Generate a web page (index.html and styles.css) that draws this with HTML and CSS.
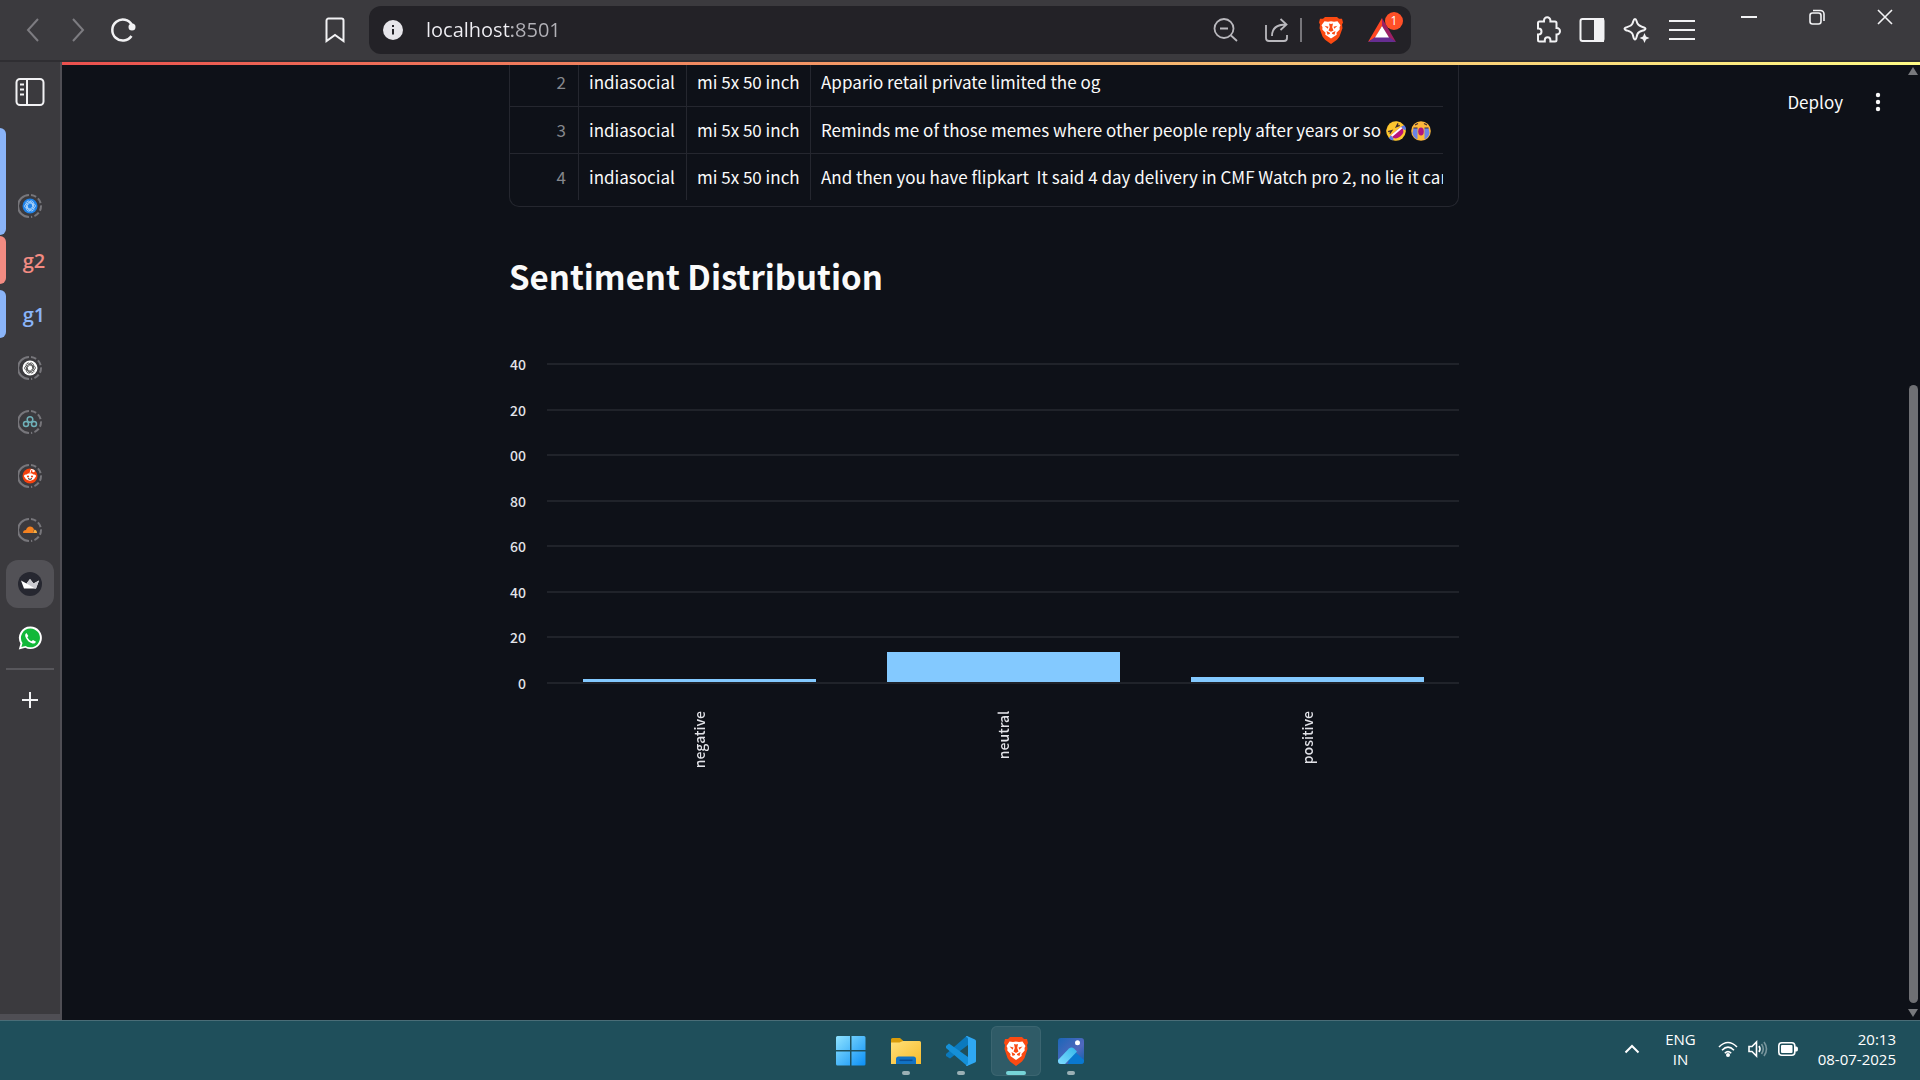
FILE: index.html
```html
<!DOCTYPE html>
<html lang="en">
<head>
<meta charset="utf-8">
<title>Sentiment Distribution</title>
<link rel="stylesheet" href="styles.css">
</head>
<body>
<svg class="defs" aria-hidden="true">
  <defs>
    <symbol id="ring" viewBox="0 0 24 24"><g fill="none" stroke="#77767b" stroke-width="2"><path d="M11 1A11 11 0 0 0 11 23"/><path d="M13 1A11 11 0 0 1 23 12A11 11 0 0 1 13 23" stroke-dasharray="5.500 2.300"/></g></symbol>
    <symbol id="knot" viewBox="0 0 14 14"><g fill="none" stroke="currentColor" stroke-width=".9"><path d="M7 1.500a2.600 2.600 0 0 1 4 2.500v4L7.500 10M11.800 4.500a2.600 2.600 0 0 1-.2 4.700L8 11.300 4.500 9.200M11.500 9.500a2.600 2.600 0 0 1-4 2.800L4 10.200V6.200M7 12.500a2.600 2.600 0 0 1-4-2.500V6l3.500-2M2.200 9.500a2.600 2.600 0 0 1 .2-4.700L6 2.700l3.500 2.100M2.500 4.500a2.600 2.600 0 0 1 4-2.800L10 3.800v4"/></g></symbol>
    <symbol id="brave" viewBox="0 0 26 30"><path d="M7 1h12l2 2 3 0 1 4-1 2 .5 4-3 9-2.500 3.500L13 30l-6-4.500L4.500 22l-3-9L2 9 1 7l1-4h3z" fill="#fb4a12"/><path d="M13 5.500l3 .6 3.500-.6 3 4.500-1 2 .2 2.500-3.200 3.500.2 2L13 24l-5.700-4 .2-2-3.200-3.500.2-2.500-1-2 3-4.500 3.500.6z" fill="#fff"/><path d="M6.500 10.500l4 1-.8 2.200zM19.500 10.500l-4 1 .8 2.200zM11 8l2 .6L15 8l-.8 4 1.300 3.500L13 17l-2.500-1.500L11.800 12zM8.500 16l3.500 2v1l-2.500 1zM17.500 16L14 18v1l2.500 1z" fill="#fb4a12"/></symbol>
  </defs>
</svg>

<header class="toolbar">
  <nav class="history">
    <button class="icon-btn dim" aria-label="Back"><svg width="14" height="24" viewBox="0 0 14 24"><path d="M12 1L2 12l10 11"/></svg></button>
    <button class="icon-btn dim" aria-label="Forward"><svg width="14" height="24" viewBox="0 0 14 24"><path d="M2 1l10 11L2 23"/></svg></button>
    <button class="icon-btn" aria-label="Reload"><svg width="26" height="26" viewBox="0 0 26 26"><path d="M21.500 19A10.500 10.500 0 1 1 22 8" stroke-width="2.500"/><circle cx="22" cy="10" r="3.500" fill="currentColor" stroke="none"/></svg></button>
  </nav>
  <button class="icon-btn bookmark" aria-label="Bookmark"><svg width="20" height="26" viewBox="0 0 20 26"><path d="M3.500 1.500h13a2 2 0 0 1 2 2v20.500L10 18l-8.500 6V3.500a2 2 0 0 1 2-2z"/></svg></button>
  <div class="address">
    <svg class="info" width="20" height="20" viewBox="0 0 20 20" aria-hidden="true"><circle cx="10" cy="10" r="10" fill="#e6e5ea"/><path d="M10 9v5.500M10 5v2" stroke="#232227" stroke-width="2"/></svg>
    <input class="url" type="text" aria-label="Address" value="localhost:8501">
    <button class="icon-btn soft" aria-label="Zoom out"><svg width="26" height="24" viewBox="0 0 26 24"><circle cx="11" cy="10.500" r="9.500" stroke-width="1.800"/><path d="M18 17.500l6 5.500M7 10.500h8" stroke-width="1.800"/></svg></button>
    <button class="icon-btn soft share" aria-label="Share"><svg width="26" height="26" viewBox="0 0 26 26"><path d="M2 8v13a3 3 0 0 0 3 3h15a3 3 0 0 0 3-3v-3" stroke-width="1.800"/><path d="M8 19C8 12 12 7.500 22 7.500M16.500 2L22.500 7.500l-6 5.500" stroke-width="1.800"/></svg></button>
    <span class="divider"></span>
    <button class="icon-btn" aria-label="Brave Shields"><svg width="26" height="28" viewBox="0 0 26 30" stroke="none" preserveAspectRatio="none"><use href="#brave"/></svg></button>
    <button class="icon-btn rewards" aria-label="Rewards"><svg width="28" height="26" viewBox="0 0 28 26" stroke="none"><path d="M14 1L0 25l7-4 7-12z" fill="#ff4724"/><path d="M14 1l14 24-7-4-7-12z" fill="#9e1f63"/><path d="M0 25h28l-7-5H7z" fill="#662d91"/><path d="M14 9l7 11.500H7z" fill="#fff"/></svg><span class="badge">1</span></button>
  </div>
  <div class="tools">
    <button class="icon-btn" aria-label="Extensions"><svg width="26" height="28" viewBox="0 0 26 28"><path d="M4.500 5.500H9V4.500a3.200 3.200 0 0 1 6.400 0v1h4.600a1.500 1.500 0 0 1 1.500 1.500v5h.3a3.200 3.200 0 0 1 0 6.400h-.3v5.600a1.500 1.500 0 0 1-1.500 1.500h-4.600V24a2.800 2.800 0 0 0-5.600 0v1.500H4.500A1.500 1.500 0 0 1 3 24v-5.400h.5a3 3 0 0 0 0-6H3V7a1.500 1.500 0 0 1 1.500-1.500z"/></svg></button>
    <button class="icon-btn" aria-label="Sidebar"><svg width="26" height="26" viewBox="0 0 26 26"><rect x="1.500" y="2" width="23" height="22" rx="2"/><path d="M16 2h8v22h-8z" fill="currentColor"/></svg></button>
    <button class="icon-btn" aria-label="Leo AI"><svg width="28" height="28" viewBox="0 0 28 28"><path d="M12 3c1.500 0 1.500 2.500 2.500 4.500S18 10.500 21 11.500c2 .7 2 2 0 2.700-3 1-5.500 1.500-6.500 3.800S13.500 23.500 12 23.500s-1.500-3-2.500-5.500-3.500-2.800-6.500-3.800c-2-.7-2-2 0-2.700 3-1 5.500-1.500 6.500-4S10.500 3 12 3z"/><path d="M21.500 17l1.500 3.500 3.500 1.500-3.500 1.500-1.500 3.500-1.500-3.500-3.500-1.500 3.500-1.500z" fill="currentColor" stroke="none"/></svg></button>
    <button class="icon-btn" aria-label="Menu"><svg width="26" height="22" viewBox="0 0 26 22"><path d="M0 2h26M0 11h26M0 20h26"/></svg></button>
  </div>
  <div class="window-controls">
    <button class="icon-btn" aria-label="Minimise"><svg width="16" height="16" viewBox="0 0 16 16"><path d="M0 8h16"/></svg></button>
    <button class="icon-btn" aria-label="Restore"><svg width="16" height="16" viewBox="0 0 16 16"><rect x="1" y="4" width="11" height="11" rx="2.500" stroke-width="1.600"/><path d="M4 1.500h7.500a3.500 3.500 0 0 1 3.500 3.500v7" stroke-width="1.600"/></svg></button>
    <button class="icon-btn" aria-label="Close"><svg width="16" height="16" viewBox="0 0 16 16"><path d="M1 1l14 14M15 1L1 15" stroke-width="1.600"/></svg></button>
  </div>
</header>

<div class="workspace">
  <nav class="tabs" aria-label="Tabs">
    <button class="tabs-toggle" aria-label="Toggle tabs"><svg width="30" height="30" viewBox="0 0 30 30" fill="none" stroke="#f2f2f4" stroke-width="2"><rect x="1.500" y="2" width="27" height="26" rx="3.500"/><path d="M12 2v26"/><path d="M5 7.500h4M5 12.500h4M5 17.500h4"/></svg></button>
    <button class="tab tall strip blue" aria-label="ChatGPT"><svg width="24" height="24" viewBox="0 0 24 24"><use href="#ring"/><circle cx="12" cy="12" r="7.500" fill="#1e83ea"/><svg x="6" y="6" width="12" height="12" color="#d5ecff"><use href="#knot"/></svg></svg></button>
    <button class="tab strip red">g2</button>
    <button class="tab strip blue">g1</button>
    <button class="tab" aria-label="ChatGPT"><svg width="24" height="24" viewBox="0 0 24 24"><use href="#ring"/><circle cx="12" cy="12" r="7.500" fill="#fff"/><svg x="6" y="6" width="12" height="12" color="#222"><use href="#knot"/></svg></svg></button>
    <button class="tab" aria-label="Linked app"><svg width="24" height="24" viewBox="0 0 24 24"><use href="#ring"/><g fill="none" stroke="#6fb0b8" stroke-width="1.500"><circle cx="12" cy="9.500" r="2.800"/><circle cx="8" cy="14" r="2.500"/><circle cx="16" cy="14" r="2.500"/></g></svg></button>
    <button class="tab" aria-label="Reddit"><svg width="24" height="24" viewBox="0 0 24 24"><use href="#ring"/><circle cx="12" cy="12" r="7.500" fill="#f5410e"/><path d="M12 9l1-3.500 2.500.5" fill="none" stroke="#fff"/><circle cx="15.500" cy="7" r="1.300" fill="#fff"/><circle cx="7.500" cy="12" r="1.500" fill="#fff"/><circle cx="16.500" cy="12" r="1.500" fill="#fff"/><ellipse cx="12" cy="13" rx="5" ry="3.700" fill="#fff"/><circle cx="10" cy="12.500" r="1.100" fill="#f5410e"/><circle cx="14" cy="12.500" r="1.100" fill="#f5410e"/><path d="M10 14.600q2 1.500 4 0" stroke="#222" fill="none"/></svg></button>
    <button class="tab" aria-label="Cloudflare"><svg width="24" height="24" viewBox="0 0 24 24"><use href="#ring"/><path d="M5 15q0-3 3-3 1-3.500 4-3.500 3 0 4 3l-1 3.500z" fill="#f48120"/><path d="M15 15l1.500-3.500q2.500.5 2.500 3.500z" fill="#faad3f"/></svg></button>
    <button class="tab active" aria-label="Streamlit"><svg width="24" height="24" viewBox="0 0 24 24"><circle cx="12" cy="12" r="12" fill="#262730"/><path d="M3 8.500l5.500 3L12 7l3.500 4.500 5.500-3L18 16.500H6z" fill="#fff"/><path d="M12 7l-3.500 4.500L17 16.500h1l3-8-5.500 3z" fill="#c9c9cf"/></svg></button>
    <button class="tab" aria-label="WhatsApp"><svg width="24" height="24" viewBox="0 0 24 24"><path d="M12.300.5a11.300 11.300 0 1 1-5 21.300L.8 23.500l1.700-6A11.300 11.300 0 0 1 12.300.5z" fill="#fff"/><path d="M12.300 2.500a9.400 9.400 0 1 1-4.700 17.400L3.400 21l1.100-4a9.400 9.400 0 0 1 7.800-14.500z" fill="#12b839"/><path d="M8.500 7q-2 1-1 4 2 5 7 6.500 2.500.5 3.500-1.800l-3-1.700-1.500 1.300q-3-1.300-4.200-4L10.400 10z" fill="#fff"/></svg></button>
    <hr class="tabs-rule">
    <button class="tab" aria-label="New tab"><svg width="16" height="16" viewBox="0 0 16 16"><path d="M8 0v16M0 8h16" stroke="#f2f2f4" stroke-width="2"/></svg></button>
  </nav>

  <div class="page">
    <div class="loading"></div>
    <main class="content">
      <div class="frame">
        <table class="data">
          <colgroup><col class="c-index"><col class="c-sub"><col class="c-query"><col></colgroup>
          <tbody>
            <tr><th scope="row">2</th><td>indiasocial</td><td>mi 5x 50 inch</td><td>Appario retail private limited the og</td></tr>
            <tr><th scope="row">3</th><td>indiasocial</td><td>mi 5x 50 inch</td><td>Reminds me of those memes where other people reply after years or so
              <svg class="emoji" width="20" height="20" viewBox="0 0 20 20" role="img" aria-label="rolling on the floor laughing"><g transform="rotate(-40 10 10)"><circle cx="10" cy="10" r="9.800" fill="#fdc62f"/><path d="M3 10h14q0 7-7 7t-7-7z" fill="#b8127c"/><path d="M3.300 10h13.400v2H3.500z" fill="#fff"/><path d="M3.500 5.500L7 7 3.500 8M16.500 5.500L13 7l3.500 1" fill="none" stroke="#402a32" stroke-width="1.300"/><path d="M0 11l3-1q1 5-1 5T0 11zM20 11l-3-1q-1 5 1 5t2-4z" fill="#5b78e8"/></g></svg>
              <svg class="emoji" width="20" height="20" viewBox="0 0 20 20" role="img" aria-label="loudly crying"><circle cx="10" cy="10" r="9.800" fill="#fdb83b"/><path d="M2.500 7h4v11.500Q2 16 1.500 12zM17.500 7h-4v11.500q4.500-2.500 5-6.500z" fill="#6a83e6"/><ellipse cx="10" cy="10.500" rx="2.800" ry="4" fill="#b0127e"/><path d="M2.500 7h4M13.500 7h4M4 4l3-1.500M16 4l-3-1.500" stroke="#402a32" stroke-width="1.200"/></svg></td></tr>
            <tr><th scope="row">4</th><td>indiasocial</td><td>mi 5x 50 inch</td><td>And then you have flipkart&nbsp; It said 4 day delivery in CMF Watch pro 2, no lie it car</td></tr>
          </tbody>
        </table>
      </div>

      <h2 class="title">Sentiment Distribution</h2>

      <figure class="chart">
        <div class="plot">
          <div class="tick"><span>40</span></div>
          <div class="tick"><span>20</span></div>
          <div class="tick"><span>00</span></div>
          <div class="tick"><span>80</span></div>
          <div class="tick"><span>60</span></div>
          <div class="tick"><span>40</span></div>
          <div class="tick"><span>20</span></div>
          <div class="tick"><span>0</span></div>
          <div class="bars">
            <div class="slot"><div class="bar" style="height: 0.9%"></div></div>
            <div class="slot"><div class="bar" style="height: 9.4%"></div></div>
            <div class="slot"><div class="bar" style="height: 1.5%"></div></div>
          </div>
        </div>
        <div class="categories"><span>negative</span><span>neutral</span><span>positive</span></div>
      </figure>
    </main>

    <div class="scrollbar" aria-hidden="true">
      <svg width="10" height="8" viewBox="0 0 10 8"><path d="M5 0l5 8H0z"/></svg>
      <div class="track"><div class="thumb"></div></div>
      <svg width="10" height="8" viewBox="0 0 10 8"><path d="M5 8l5-8H0z"/></svg>
    </div>

    <div class="app-actions">
      <button class="deploy">Deploy</button>
      <button class="kebab" aria-label="More options"><svg width="6" height="20" viewBox="0 0 6 20" fill="#fafafa"><circle cx="3" cy="3" r="2.200"/><circle cx="3" cy="10" r="2.200"/><circle cx="3" cy="17" r="2.200"/></svg></button>
    </div>
  </div>
</div>

<footer class="taskbar">
  <div class="apps">
    <button class="app" aria-label="Start"><svg width="30" height="30" viewBox="0 0 30 30"><defs><linearGradient id="win" x1="0" y1="0" x2="1" y2="1"><stop offset="0" stop-color="#8fe3ff"/><stop offset="1" stop-color="#0b8ff5"/></linearGradient></defs><path d="M0 1.500A1.500 1.500 0 0 1 1.500 0H14v14H0zM15.500 0H28a1.500 1.500 0 0 1 1.500 1.500V14h-14zM0 15.500h14v14H1.500A1.500 1.500 0 0 1 0 28zM15.500 15.500h14V28a1.500 1.500 0 0 1-1.500 1.500H15.500z" fill="url(#win)"/></svg></button>
    <button class="app running" aria-label="File Explorer"><svg width="30" height="30" viewBox="0 0 30 30"><defs><linearGradient id="fold" x1="0" y1="0" x2="1" y2="1"><stop offset="0" stop-color="#ffe07a"/><stop offset="1" stop-color="#f8bc2c"/></linearGradient></defs><path d="M0 3.500A1.500 1.500 0 0 1 1.500 2H9l4 3.500V8H0z" fill="#d99c0a"/><path d="M0 6.500h8.500L12 5h16.500A1.500 1.500 0 0 1 30 6.500V28H0z" fill="url(#fold)"/><path d="M5 28v-5a2.500 2.500 0 0 1 2.500-2.500h15A2.500 2.500 0 0 1 25 23v5z" fill="#1273c4"/><path d="M8.500 24.300h13" stroke="#0a4d94" stroke-width="1.500"/></svg></button>
    <button class="app running" aria-label="Visual Studio Code"><svg width="30" height="30" viewBox="0 0 30 30"><path d="M22 0v9L4 22.500 0 20v-2L20 .5z" fill="#0a79bd"/><path d="M0 10l3-2.500L22 21v9l-2-1L0 12z" fill="#1590d8"/><path d="M21 0l8 3.500q1 .5 1 1.500v20q0 1-1 1.500L21 30q-1 0-1-1 2 0 2-2V3q0-2-2-2 0-1 1-1z" fill="#2fa8f3"/></svg></button>
    <button class="app running current" aria-label="Brave"><svg width="26" height="30" viewBox="0 0 26 30"><use href="#brave"/></svg></button>
    <button class="app running" aria-label="Photos"><svg width="26" height="26" viewBox="0 0 26 26"><defs><linearGradient id="ph" x1="0" y1="0" x2="1" y2="1"><stop offset="0" stop-color="#1b66b8"/><stop offset=".6" stop-color="#5168bd"/><stop offset="1" stop-color="#0e5fa8"/></linearGradient><linearGradient id="mt" x1="1" y1="0" x2="0" y2="1"><stop offset="0" stop-color="#33b7ea"/><stop offset="1" stop-color="#7fdcff"/></linearGradient></defs><rect width="26" height="26" rx="3" fill="url(#ph)"/><path d="M13 10l13 12v1a3 3 0 0 1-3 3H10z" fill="#0a78cf"/><path d="M0 22L11 10.500q2.500-2 5 0l3 3L7 26H3a3 3 0 0 1-3-3z" fill="url(#mt)"/><circle cx="19.500" cy="4.800" r="2.500" fill="#fff"/></svg></button>
  </div>
  <div class="tray">
    <button class="tray-btn chevron" aria-label="Show hidden icons"><svg width="16" height="10" viewBox="0 0 16 10"><path d="M1.500 8.500L8 2l6.500 6.500" fill="none" stroke="#fff" stroke-width="2"/></svg></button>
    <button class="tray-btn lang">ENG<br>IN</button>
    <button class="tray-btn status" aria-label="Network, sound and battery">
      <svg width="20" height="18" viewBox="0 0 20 18"><g fill="none" stroke="#fff" stroke-width="1.600"><path d="M1 7q9-9 18 0M4 10.200q6-6 12 0M6.800 13.200q3.200-3.200 6.400 0"/></g><circle cx="10" cy="15" r="2" fill="#fff"/></svg>
      <svg width="20" height="18" viewBox="0 0 20 18"><g fill="none" stroke="#fff" stroke-width="1.600"><path d="M1 6.500h3L8.500 2v14L4 11.500H1z"/><path d="M11 6q2 3 0 6"/><path d="M13.500 4q3.500 5 0 10M16 2q5 7 0 14" opacity=".4"/></g></svg>
      <svg width="20" height="14" viewBox="0 0 20 14"><rect x=".8" y=".8" width="16" height="12.400" rx="3" fill="none" stroke="#fff" stroke-width="1.600"/><rect x="3" y="3" width="11.500" height="8" rx="1" fill="#fff"/><path d="M17 4.500h1.500q1.500 0 1.500 2.500t-1.500 2.500H17z" fill="#fff"/></svg>
    </button>
    <button class="tray-btn clock"><time datetime="2025-07-08T20:13">20:13<br>08-07-2025</time></button>
  </div>
</footer>
</body>
</html>
```
FILE: styles.css
```css
:root {
  --chrome: #3b3a3e;
  --page: #0e1118;
  --line: #25272f;
  --task: #1f4f5b;
  --app-font: "Noto Sans CJK JP", "Noto Sans", sans-serif;
  --os-font: "Open Sans", "Noto Sans", sans-serif;
}

* { box-sizing: border-box; }

body {
  margin: 0;
  height: 100vh;
  display: flex;
  flex-direction: column;
  overflow: hidden;
  background: var(--page);
  font-family: var(--os-font);
}

button {
  margin: 0;
  padding: 0;
  border: 0;
  background: none;
  color: inherit;
  font: inherit;
}

svg { display: block; }
.defs { position: absolute; width: 0; height: 0; }

/* Browser toolbar */
.toolbar {
  flex: none;
  height: 62px;
  display: flex;
  align-items: center;
  background: var(--chrome);
  border-bottom: 2px solid #2f2e32;
  color: #f2f2f4;
}

.icon-btn {
  position: relative;
  display: flex;
  align-items: center;
  justify-content: center;
}
.icon-btn svg { fill: none; stroke: currentColor; stroke-width: 2; }
.icon-btn svg[stroke="none"] { stroke: none; }
.dim { color: #7d7c81; }
.soft { color: #b9b8bd; }

.history { display: flex; width: 320px; padding-left: 26px; }
.history .icon-btn { margin-right: 31px; }
.history .icon-btn + .icon-btn { margin-right: 25px; }
.bookmark { width: 30px; margin-right: 19px; }

.address {
  flex: 1;
  height: 48px;
  display: flex;
  align-items: center;
  padding: 0 15px 0 14px;
  border-radius: 12px;
  background: #232227;
}
.url {
  flex: 1;
  min-width: 0;
  margin-left: 23px;
  padding: 0;
  border: 0;
  outline: 0;
  font-family: var(--os-font);
  font-size: 20px;
  line-height: 28px;
  color: transparent;
  background: linear-gradient(90deg, #f0eff4 86px, #b3b2b8 86px);
  -webkit-background-clip: text;
  background-clip: text;
}
.share { margin-left: 25px; }
.divider { width: 2px; height: 24px; margin: 0 16px 0 10px; background: #77767b; }
.rewards { margin-left: 24px; }
.badge {
  position: absolute;
  top: -5px;
  right: -7px;
  width: 18px;
  height: 18px;
  border-radius: 9px;
  background: #ff5028;
  color: #fff;
  font-size: 12px;
  line-height: 18px;
  text-align: center;
}

.tools { display: flex; align-items: center; gap: 18px; margin-left: 124px; }
.window-controls { display: flex; gap: 52px; margin: 0 27px 26px 46px; }

/* Vertical tab strip */
.workspace { flex: 1; min-height: 0; display: flex; }

.tabs {
  flex: none;
  width: 62px;
  padding: 6px 6px 0 0;
  border-right: 2px solid #4f4e54;
  border-bottom: 6px solid #4f4e54;
  background: var(--chrome);
  display: flex;
  flex-direction: column;
  gap: 6px;
}
.tabs-toggle {
  flex: none;
  height: 48px;
  padding-left: 6px;
  display: flex;
  align-items: center;
  justify-content: center;
}
.tab {
  flex: none;
  height: 48px;
  margin-left: 6px;
  display: flex;
  align-items: center;
  justify-content: center;
  border-radius: 12px;
  font-size: 20px;
  font-weight: 600;
}
.tab.active { background: #525156; }
.strip { position: relative; padding-left: 8px; }
.strip::before {
  content: "";
  position: absolute;
  top: 0;
  bottom: 0;
  left: -6px;
  width: 6px;
  border-radius: 0 6px 6px 0;
  background: currentColor;
}
.strip.blue { color: #8ab4f8; }
.strip.red { color: #f28b82; }
.strip.tall { height: 107px; margin-top: 6px; margin-bottom: -5px; padding: 48px 0 0; }
.tabs-rule { flex: none; width: 48px; height: 2px; margin: 0 0 0 6px; border: 0; background: #58575c; }

/* Streamlit page */
.page {
  position: relative;
  flex: 1;
  min-width: 0;
  display: flex;
  overflow: hidden;
  color: #fafafa;
  font-family: var(--app-font);
}
.loading {
  position: absolute;
  z-index: 1;
  top: 0;
  left: 0;
  right: 0;
  height: 3px;
  background: linear-gradient(90deg, #ea504e, #fffb86);
}
.content { width: 950px; margin: -3px auto 0; }

.frame {
  padding: 0 15px 6px 0;
  border: solid var(--line);
  border-width: 0 1px 1px;
  border-radius: 0 0 10px 10px;
}
.data {
  width: 100%;
  table-layout: fixed;
  border-collapse: separate;
  border-spacing: 0;
  font-size: 17px;
  line-height: 24px;
}
.c-index { width: 69px; }
.c-sub { width: 108px; }
.c-query { width: 124px; }
.data tr { height: 47px; }
.data th, .data td {
  padding: 0 10px 1px;
  text-align: left;
  font-weight: 400;
  white-space: nowrap;
  overflow: hidden;
  border-right: 1px solid var(--line);
}
.data th { padding-right: 12px; text-align: right; color: #85878c; }
.data td:last-child { padding-right: 0; border-right: 0; }
.data tr + tr > * { border-top: 1px solid var(--line); }
.emoji { display: inline-block; margin-left: 1px; vertical-align: -4px; }

.title {
  margin: 47px 0 56px;
  font-size: 33px;
  line-height: 44px;
  font-weight: 700;
}

.chart { margin: 0; font-size: 14px; line-height: 20px; font-weight: 500; color: #e2e3e8; }
.plot {
  position: relative;
  height: 339px;
  display: flex;
  flex-direction: column;
  justify-content: space-between;
}
.tick { display: flex; align-items: center; gap: 21px; }
.tick span { width: 17px; text-align: right; }
.tick::after { content: ""; flex: 1; height: 2px; background: #20232a; }
.bars {
  position: absolute;
  top: 10px;
  bottom: 11px;
  left: 38px;
  right: 0;
  display: flex;
}
.slot { flex: 1; display: flex; align-items: flex-end; padding: 0 35px 0 36px; }
.bar { flex: 1; background: #83c9ff; }
.categories { display: flex; margin: 18px 0 0 38px; }
.categories span {
  flex: 1;
  display: flex;
  align-items: center;
  justify-content: flex-end;
  writing-mode: vertical-rl;
  transform: rotate(180deg);
}

.scrollbar {
  width: 14px;
  padding: 5px 0 3px;
  display: flex;
  flex-direction: column;
  align-items: center;
  fill: #78797d;
}
.track { flex: 1; display: flex; align-items: flex-end; padding-bottom: 6px; }
.thumb { width: 9px; height: 66.600%; border-radius: 5px; background: #6f7074; }

.app-actions {
  position: absolute;
  top: 0;
  right: 39px;
  height: 80px;
  display: flex;
  align-items: center;
  gap: 32px;
}
.deploy { font-size: 17px; line-height: 24px; }

/* Windows taskbar */
.taskbar {
  flex: none;
  height: 60px;
  display: grid;
  grid-template-columns: 1fr auto 1fr;
  align-items: center;
  border-top: 1px solid #4a6d77;
  background: var(--task);
  color: #fff;
  font-size: 15px;
  line-height: 20px;
}
.apps { grid-column: 2; display: flex; gap: 5px; padding-left: 2px; }
.app {
  position: relative;
  width: 50px;
  height: 50px;
  display: flex;
  align-items: center;
  justify-content: center;
  border-radius: 6px;
}
.app.current { background: #2f5b67; box-shadow: inset 0 0 0 1px #3b6570; }
.app.running::after {
  content: "";
  position: absolute;
  bottom: 1px;
  left: 21px;
  width: 8px;
  height: 4px;
  border-radius: 2px;
  background: #9bb0b5;
}
.app.current::after { left: 15px; width: 20px; background: #76d4d8; }
.tray { display: flex; align-items: center; justify-content: flex-end; padding: 0 24px 3px 0; }
.lang { margin: 0 22px 0 25px; text-align: center; }
.status { display: flex; align-items: center; gap: 10px; }
.clock { margin-left: 20px; text-align: right; }
```
